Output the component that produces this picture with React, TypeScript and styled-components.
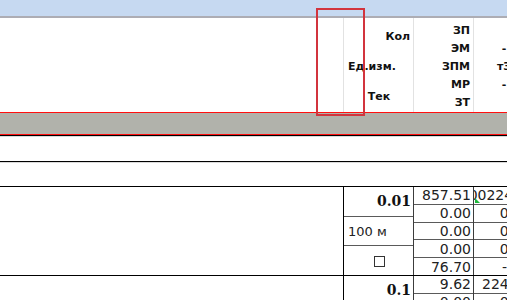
import React from 'react';
import styled, { createGlobalStyle } from 'styled-components';

const GlobalStyle = createGlobalStyle`
  html, body {
    margin: 0;
    padding: 0;
    background: #fff;
  }
  body {
    width: 507px;
    height: 300px;
    overflow: hidden;
  }
`;

const GRID = '343px 70px 60px 60px';

type Align = 'left' | 'right' | 'center';

const justify = (a: Align) =>
  a === 'left' ? 'flex-start' : a === 'right' ? 'flex-end' : 'center';

const Sheet = styled.div`
  position: relative;
  width: 507px;
  height: 300px;
  overflow: hidden;
  background: #fff;
  font-family: "DejaVu Sans", "Noto Sans", sans-serif;
  color: #1a1a1a;
`;

const TitleBar = styled.div`
  height: 16px;
  background: #c6d9f1;
  border-bottom: 2px solid #adadb4;
`;

const HeaderRow = styled.div`
  display: grid;
  grid-template-columns: ${GRID};
  height: 95px;
  box-sizing: border-box;
  border-bottom: 1px solid #ff1010;
`;

const HeadCol = styled.div<{ $lead?: boolean }>`
  display: flex;
  flex-direction: column;
  padding-top: 4px;
  border-left: ${({ $lead }) => ($lead ? 'none' : '1px solid #e2e2e2')};
  font-size: 11px;
  font-weight: 700;
  color: #111;
  overflow: hidden;
`;

const HeadLine = styled.div<{ $align: Align; $h: number }>`
  height: ${({ $h }) => $h}px;
  line-height: ${({ $h }) => $h}px;
  display: flex;
  align-items: center;
  justify-content: ${({ $align }) => justify($align)};
  padding: 0 3px 0 4px;
  white-space: nowrap;
`;

const Band = styled.div`
  height: 22px;
  box-sizing: border-box;
  background: #b1b2ab;
  border-bottom: 1px solid #ff1010;
`;

const PlainRow = styled.div<{ $h: number }>`
  height: ${({ $h }) => $h}px;
  box-sizing: border-box;
  border-top: 1px solid #000;
  box-shadow: inset 0 1px 0 #dadada;
`;

const Block = styled.div`
  display: grid;
  grid-template-columns: ${GRID};
  height: 89px;
  box-sizing: border-box;
  border-top: 1px solid #000;
`;

const Col = styled.div<{ $edge?: string }>`
  display: flex;
  flex-direction: column;
  border-left: ${({ $edge }) => ($edge ? `1px solid ${$edge}` : 'none')};
  min-width: 0;
`;

const Cell = styled.div<{ $align: Align; $line: string }>`
  position: relative;
  flex: 1;
  min-height: 0;
  display: flex;
  align-items: center;
  justify-content: ${({ $align }) => justify($align)};
  padding: 0 2px 0 4px;
  overflow: hidden;
  white-space: nowrap;
  font-size: 14px;
  color: #222;

  & + & {
    border-top: 1px solid ${({ $line }) => $line};
  }
`;

const Amount = styled.span`
  font-family: "DejaVu Serif", "Liberation Serif", serif;
  font-weight: 700;
  color: #111;
`;

const Unit = styled.span`
  font-size: 13px;
`;

const CheckBox = styled.span`
  display: block;
  width: 11px;
  height: 11px;
  box-sizing: border-box;
  border: 1px solid #333;
  margin-top: 1px;
`;

const ErrorMark = styled.span`
  position: absolute;
  left: 1px;
  bottom: 1px;
  width: 0;
  height: 0;
  border-bottom: 5px solid #1fb83a;
  border-right: 5px solid transparent;
`;

const Marker = styled.div`
  position: absolute;
  left: 316px;
  top: 8px;
  width: 49px;
  height: 108px;
  box-sizing: border-box;
  border: 2px solid #d2343d;
  pointer-events: none;
`;

interface BlockData {
  amount: string;
  unit: string;
  values: string[];
  next: { text: string; align: Align; flag?: boolean }[];
}

const blocks: BlockData[] = [
  {
    amount: '0.01',
    unit: '100 м',
    values: ['857.51', '0.00', '0.00', '0.00', '76.70'],
    next: [
      { text: '0.0022456', align: 'right', flag: true },
      { text: '0.00', align: 'right' },
      { text: '0.00', align: 'right' },
      { text: '0.00', align: 'right' },
      { text: '-', align: 'center' },
    ],
  },
  {
    amount: '0.1',
    unit: 'шт',
    values: ['9.62', '0.00', '0.00', '0.00', '0.00'],
    next: [
      { text: '224.54', align: 'right' },
      { text: '0.00', align: 'right' },
      { text: '0.00', align: 'right' },
      { text: '0.00', align: 'right' },
      { text: '-', align: 'center' },
    ],
  },
];

const costLines = ['ЗП', 'ЭМ', 'ЗПМ', 'МР', 'ЗТ'];
const indexLines = ['', '-', 'тЗ', '-', ''];

const App: React.FC = () => (
  <>
    <GlobalStyle />
    <Sheet>
      <TitleBar />
      <HeaderRow>
        <HeadCol $lead />
        <HeadCol>
          <HeadLine $align="right" $h={30}>Кол</HeadLine>
          <HeadLine $align="left" $h={30}>Ед.изм.</HeadLine>
          <HeadLine $align="center" $h={30}>Тек</HeadLine>
        </HeadCol>
        <HeadCol>
          {costLines.map((t) => (
            <HeadLine key={t} $align="right" $h={18}>{t}</HeadLine>
          ))}
        </HeadCol>
        <HeadCol>
          {indexLines.map((t, i) => (
            <HeadLine key={i} $align="center" $h={18}>{t}</HeadLine>
          ))}
        </HeadCol>
      </HeaderRow>
      <Band />
      <PlainRow $h={26} />
      <PlainRow $h={25} />
      {blocks.map((b) => (
        <Block key={b.amount}>
          <Col />
          <Col $edge="#000">
            <Cell $align="right" $line="#8c8c8c">
              <Amount>{b.amount}</Amount>
            </Cell>
            <Cell $align="left" $line="#8c8c8c">
              <Unit>{b.unit}</Unit>
            </Cell>
            <Cell $align="center" $line="#8c8c8c">
              <CheckBox />
            </Cell>
          </Col>
          <Col $edge="#3c3c3c">
            {b.values.map((v, i) => (
              <Cell key={i} $align="right" $line="#5a5a5a">{v}</Cell>
            ))}
          </Col>
          <Col $edge="#3c3c3c">
            {b.next.map((n, i) => (
              <Cell key={i} $align={n.align} $line="#5a5a5a">
                {n.flag && <ErrorMark />}
                {n.text}
              </Cell>
            ))}
          </Col>
        </Block>
      ))}
      <Marker />
    </Sheet>
  </>
);

export default App;
